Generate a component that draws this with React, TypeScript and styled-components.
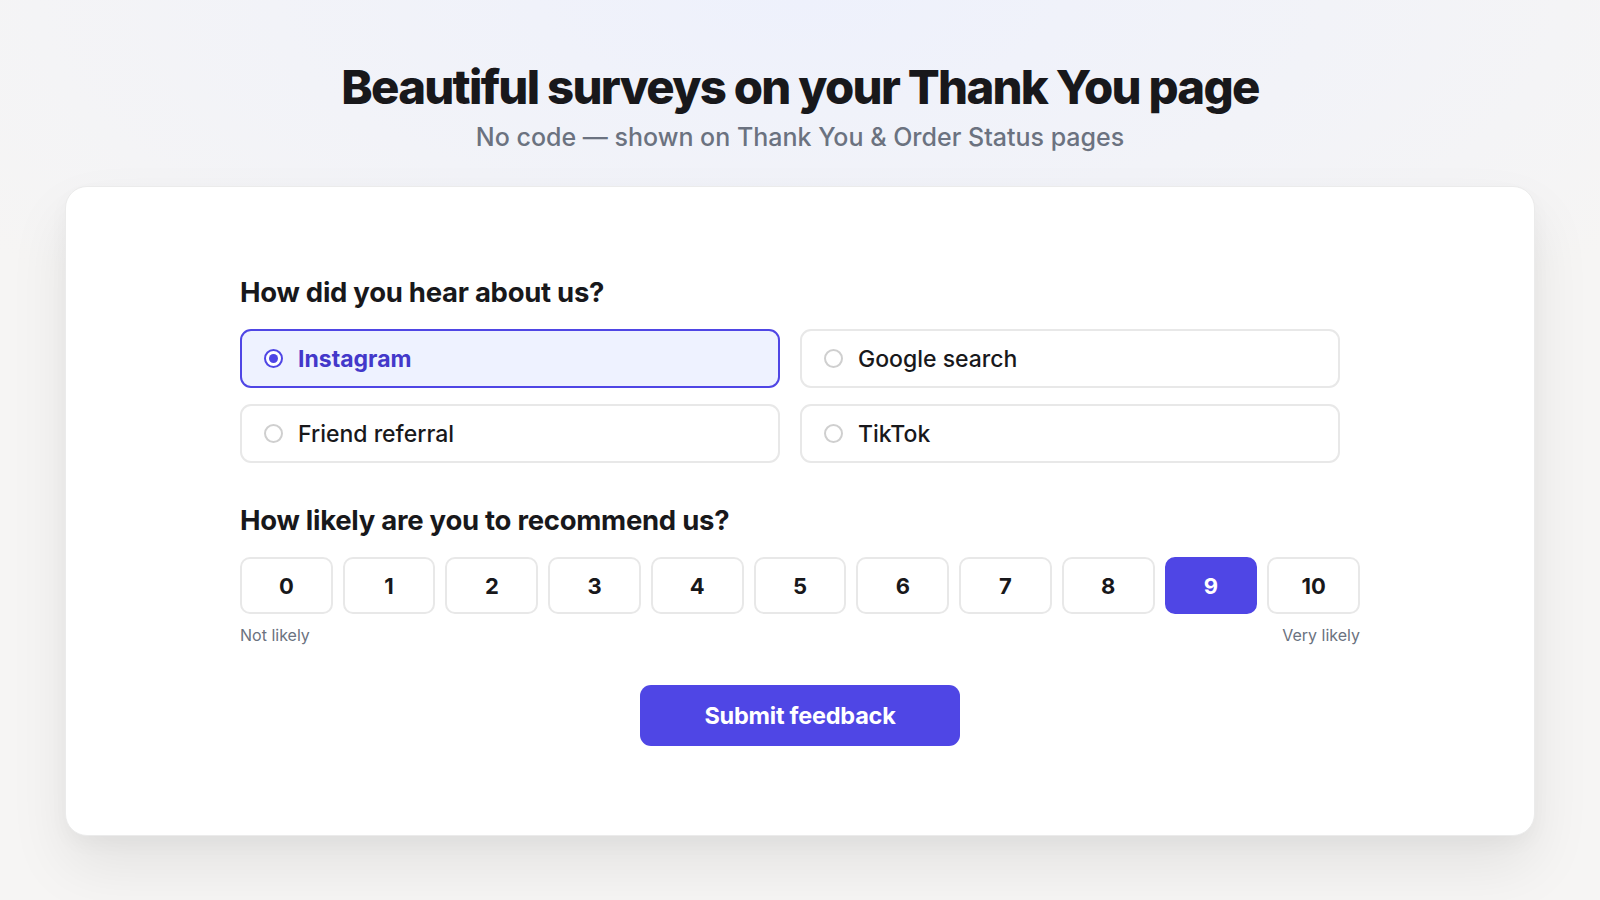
import React, { useState } from "react";
import styled, { createGlobalStyle } from "styled-components";

const GlobalStyle = createGlobalStyle`
  html, body {
    margin: 0;
    padding: 0;
  }
  body {
    font-family: Inter, "Noto Sans", "Liberation Sans", sans-serif;
    color: #18181b;
    -webkit-font-smoothing: antialiased;
  }
  * {
    box-sizing: border-box;
  }
`;

const Page = styled.div`
  width: 1600px;
  height: 900px;
  overflow: hidden;
  display: flex;
  flex-direction: column;
  align-items: center;
  background:
    radial-gradient(ellipse 1000px 420px at 50% 0%, #eef1fc 0%, rgba(240, 242, 250, 0.7) 50%, rgba(245, 245, 244, 0) 100%),
    #f6f5f4;
`;

const Header = styled.header`
  display: flex;
  flex-direction: column;
  align-items: center;
  padding-top: 58px;
`;

const Title = styled.h1`
  margin: 0;
  font-size: 47.3px;
  line-height: 58px;
  font-weight: 800;
  letter-spacing: -0.036em;
  color: #18181b;
`;

const Subtitle = styled.p`
  margin: 6px 0 0;
  font-size: 25px;
  line-height: 30px;
  font-weight: 500;
  color: #6b7280;
`;

const Card = styled.main`
  margin-top: 34px;
  width: 1470px;
  height: 650px;
  background: #ffffff;
  border: 1px solid #ebebeb;
  border-radius: 22px;
  box-shadow: 0 30px 60px rgba(0, 0, 0, 0.08), 0 8px 20px rgba(0, 0, 0, 0.03);
  display: flex;
  justify-content: center;
  padding-top: 87px;
`;

const Content = styled.div`
  width: 1120px;
  display: flex;
  flex-direction: column;
`;

const Question = styled.h2<{ $gap: number }>`
  margin: 0 0 ${(p) => p.$gap}px;
  font-size: 27.5px;
  line-height: 36px;
  font-weight: 700;
  letter-spacing: -0.01em;
  color: #18181b;
`;

const Options = styled.div`
  width: 1100px;
  display: grid;
  grid-template-columns: 1fr 1fr;
  column-gap: 20px;
  row-gap: 16px;
  margin-bottom: 39px;
`;

const Option = styled.button<{ $selected: boolean }>`
  height: 59px;
  display: flex;
  align-items: center;
  gap: 15px;
  padding: 0 22px;
  border-radius: 11px;
  border: 2px solid ${(p) => (p.$selected ? "#4f46e5" : "#e8e8e8")};
  background: ${(p) => (p.$selected ? "#eef2ff" : "#ffffff")};
  font-family: inherit;
  font-size: 23px;
  font-weight: ${(p) => (p.$selected ? 700 : 500)};
  color: ${(p) => (p.$selected ? "#4338ca" : "#18181b")};
  cursor: pointer;
  text-align: left;
`;

const Radio = styled.span<{ $selected: boolean }>`
  width: 19px;
  height: 19px;
  flex: none;
  border-radius: 50%;
  border: 2px solid ${(p) => (p.$selected ? "#4f46e5" : "#cfcfcf")};
  display: flex;
  align-items: center;
  justify-content: center;
  background: #ffffff;

  &::after {
    content: "";
    width: 9px;
    height: 9px;
    border-radius: 50%;
    background: ${(p) => (p.$selected ? "#4f46e5" : "transparent")};
  }
`;

const Scale = styled.div`
  display: flex;
  gap: 10px;
  margin-bottom: 12px;
`;

const ScoreButton = styled.button<{ $selected: boolean }>`
  flex: 1;
  height: 57px;
  border-radius: 10px;
  border: 2px solid ${(p) => (p.$selected ? "#4f46e5" : "#e8e8e8")};
  background: ${(p) => (p.$selected ? "#4f46e5" : "#ffffff")};
  color: ${(p) => (p.$selected ? "#ffffff" : "#18181b")};
  font-family: inherit;
  font-size: 22px;
  font-weight: 700;
  cursor: pointer;
`;

const ScaleLabels = styled.div`
  display: flex;
  justify-content: space-between;
  font-size: 16px;
  line-height: 18px;
  color: #6b7280;
  margin-bottom: 41px;
`;

const Submit = styled.button`
  align-self: center;
  width: 320px;
  height: 61px;
  border: none;
  border-radius: 11px;
  background: #4f46e5;
  color: #ffffff;
  font-family: inherit;
  font-size: 23.5px;
  font-weight: 700;
  letter-spacing: -0.01em;
  cursor: pointer;
`;

const sources = ["Instagram", "Google search", "Friend referral", "TikTok"];
const scores = Array.from({ length: 11 }, (_, i) => i);

export default function App() {
  const [source, setSource] = useState("Instagram");
  const [score, setScore] = useState(9);

  return (
    <Page>
      <GlobalStyle />
      <Header>
        <Title>Beautiful surveys on your Thank You page</Title>
        <Subtitle>No code — shown on Thank You &amp; Order Status pages</Subtitle>
      </Header>
      <Card>
        <Content>
          <Question $gap={19}>How did you hear about us?</Question>
          <Options>
            {sources.map((s) => (
              <Option key={s} $selected={s === source} onClick={() => setSource(s)}>
                <Radio $selected={s === source} />
                {s}
              </Option>
            ))}
          </Options>
          <Question $gap={19}>How likely are you to recommend us?</Question>
          <Scale>
            {scores.map((n) => (
              <ScoreButton key={n} $selected={n === score} onClick={() => setScore(n)}>
                {n}
              </ScoreButton>
            ))}
          </Scale>
          <ScaleLabels>
            <span>Not likely</span>
            <span>Very likely</span>
          </ScaleLabels>
          <Submit>Submit feedback</Submit>
        </Content>
      </Card>
    </Page>
  );
}
